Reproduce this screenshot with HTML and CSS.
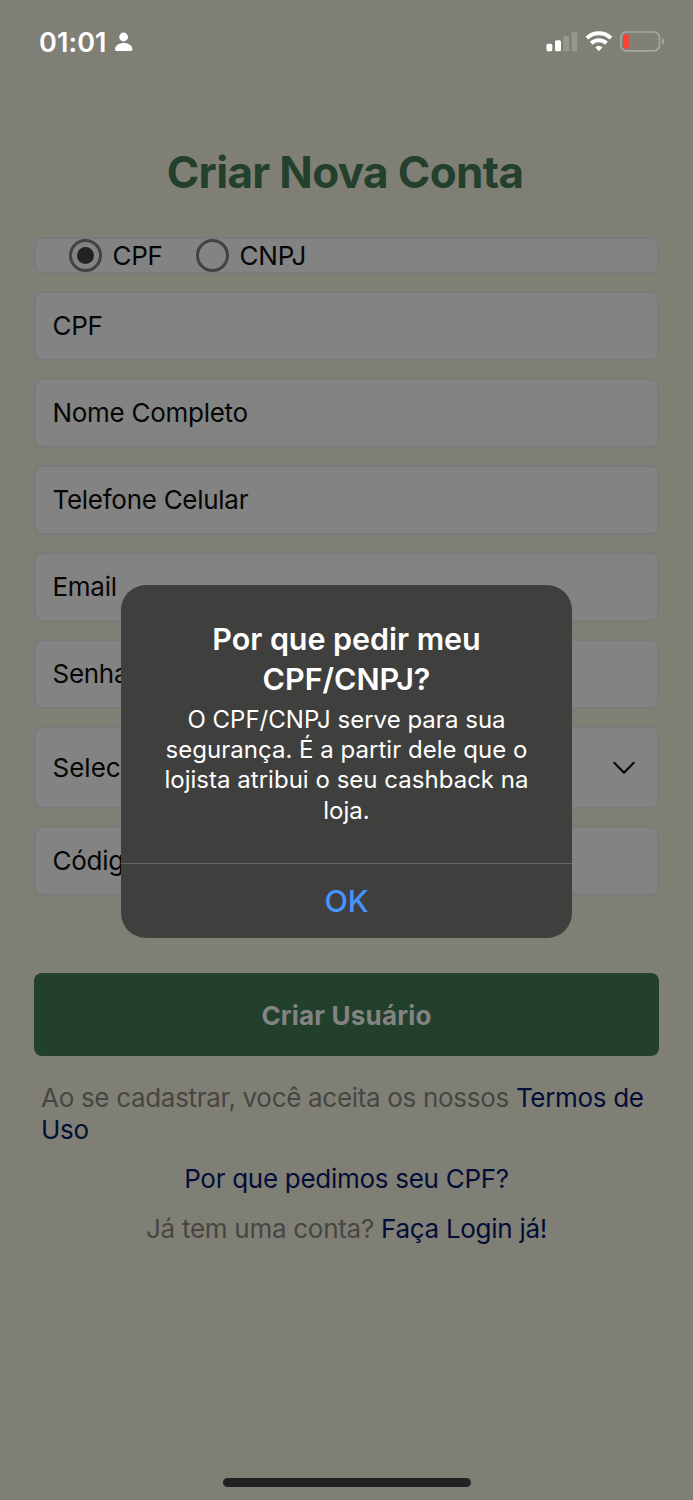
FILE: index.html
```html
<!DOCTYPE html>
<html lang="pt-BR">
<head>
<meta charset="utf-8">
<title>Criar Nova Conta</title>
<link rel="stylesheet" href="styles.css">
</head>
<body>
<div class="screen">
  <header class="status">
    <span class="time">01:01</span>
    <svg class="person" width="20" height="20" viewBox="0 0 20 20" fill="#fff"><circle cx="9.6" cy="5" r="4.4"/><path d="M1 17.2C1 13.6 5 11 9.7 11s8.7 2.600 8.700 6.200c0 1.200-.6 1.700-1.700 1.700H2.700C1.600 18.900 1 18.400 1 17.200Z"/></svg>
    <svg class="indicators" width="120" height="24" viewBox="0 0 120 24">
      <rect x="0.500" y="13.700" width="5.800" height="7.600" rx="1.500" fill="#fff"/>
      <rect x="9" y="10.200" width="6" height="11.100" rx="1.500" fill="#fff"/>
      <rect x="17.400" y="6" width="5.800" height="15.300" rx="1.500" fill="#979790"/>
      <rect x="25.600" y="2" width="5.800" height="19.300" rx="1.500" fill="#979790"/>
      <g fill="none" stroke="#fff" stroke-width="4"><path d="M40.900 8.100a17.300 17.300 0 0 1 24 0"/><path d="M45.300 13.200a11 11 0 0 1 15.200 0"/></g>
      <path d="M49.300 17.300a5.600 5.600 0 0 1 7.200 0L52.900 21.200Z" fill="#fff"/>
      <rect x="74.900" y="2" width="38.600" height="18.800" rx="5.500" fill="none" stroke="#a6a6a1" stroke-width="1.700"/>
      <rect x="77" y="4.300" width="5.800" height="14.400" rx="2.200" fill="#ff4035"/>
      <path d="M116 8.300c3 1 3 5 0 6.200Z" fill="#a6a6a1"/>
    </svg>
  </header>
  <main class="form">
    <h1 class="heading">Criar Nova Conta</h1>
    <div class="box radios">
      <label class="choice"><span class="radio on"></span>CPF</label>
      <label class="choice"><span class="radio"></span>CNPJ</label>
    </div>
    <div class="box field">CPF</div>
    <div class="box field">Nome Completo</div>
    <div class="box field">Telefone Celular</div>
    <div class="box field">Email</div>
    <div class="box field">Senha</div>
    <div class="box field select"><span>Selecione</span>
      <svg width="22" height="13" viewBox="0 0 22 13" fill="none" stroke="#060606" stroke-width="2.100" stroke-linecap="round" stroke-linejoin="round"><path d="M1.300 1.800 11 11.700l9.700-9.900"/></svg>
    </div>
    <div class="box field">Código</div>
    <div class="submit">Criar Usuário</div>
    <p class="terms">Ao se cadastrar, você aceita os nossos <a>Termos de<br>Uso</a></p>
    <p class="why"><a>Por que pedimos seu CPF?</a></p>
    <p class="login">Já tem uma conta? <a>Faça Login já!</a></p>
  </main>
  <div class="home"></div>
  <section class="alert" role="alertdialog">
    <div class="content">
      <h2 class="alert-title">Por que pedir meu<br>CPF/CNPJ?</h2>
      <p class="message">O CPF/CNPJ serve para sua<br>segurança. É a partir dele que o<br>lojista atribui o seu cashback na<br>loja.</p>
    </div>
    <div class="ok">OK</div>
  </section>
</div>
</body>
</html>
```
FILE: styles.css
```css
* { box-sizing: border-box; }
body { margin: 0; }
h1, h2, p { margin: 0; }
.screen {
  position: relative;
  width: 693px;
  height: 1500px;
  display: flex;
  flex-direction: column;
  overflow: hidden;
  background: #807f76;
  color: #060606;
  font-family: Inter, sans-serif;
  font-size: 26px;
  letter-spacing: -0.28px;
  white-space: nowrap;
}
.status {
  display: flex;
  height: 84px;
  padding: 0 27px 0 39px;
  align-items: center;
  color: #fff;
}
.time { font-size: 27px; font-weight: 600; letter-spacing: 0.1px; }
.person { margin-left: 7px; }
.indicators { margin-left: auto; }
.form {
  display: flex;
  flex-direction: column;
  padding: 0 34px;
}
.heading {
  height: 60px;
  margin: 58px 0 35px;
  line-height: 60px;
  font-size: 44px;
  font-weight: 700;
  letter-spacing: -0.65px;
  text-align: center;
  text-indent: -3px;
  color: #23402d;
}
.box {
  flex: none;
  margin-bottom: 17px;
  border: 2px solid #7b7b7b;
  border-radius: 8px;
  background: #838383;
}
.radios {
  display: flex;
  height: 37px;
  padding-left: 33px;
  align-items: center;
  gap: 33.5px;
}
.choice { display: flex; align-items: center; gap: 10.5px; }
.radio {
  display: grid;
  place-items: center;
  width: 33px;
  height: 33px;
  border: 3px solid #424242;
  border-radius: 50%;
}
.on::after {
  content: "";
  width: 17px;
  height: 17px;
  border-radius: 50%;
  background: #222;
}
.field {
  display: flex;
  height: 70px;
  padding: 0 22px 2px 16.5px;
  align-items: center;
  justify-content: space-between;
}
.select { height: 83px; padding-bottom: 0; letter-spacing: 0; }
.submit {
  height: 83px;
  margin-top: 60px;
  border-radius: 8px;
  background: #23402d;
  color: #838383;
  font-weight: 700;
  letter-spacing: 0.2px;
  line-height: 85px;
  text-align: center;
}
.terms, .why, .login { line-height: 32px; color: #464642; }
.terms { padding-left: 7px; margin-top: 26px; letter-spacing: -0.31px; }
.why, .login { text-align: center; margin-top: 17px; }
.login { margin-top: 18px; }
a { color: #030e38; }
.home {
  width: 248px;
  height: 9px;
  margin: auto auto 13px;
  border-radius: 5px;
  background: #222;
}
.alert {
  position: absolute;
  left: 121px;
  top: 585px;
  width: 451px;
  height: 353px;
  border-radius: 25px;
  background: #3f3f3e;
  color: #fff;
  text-align: center;
}
.content { height: 279px; padding-top: 34px; border-bottom: 1px solid #646463; }
.alert-title { font-size: 30.5px; font-weight: 600; line-height: 40px; letter-spacing: -0.05px; }
.message { margin-top: 6px; font-size: 24px; line-height: 30.2px; letter-spacing: 0.02px; }
.ok { line-height: 74px; font-size: 30.5px; font-weight: 500; color: #4794ff; }
```
